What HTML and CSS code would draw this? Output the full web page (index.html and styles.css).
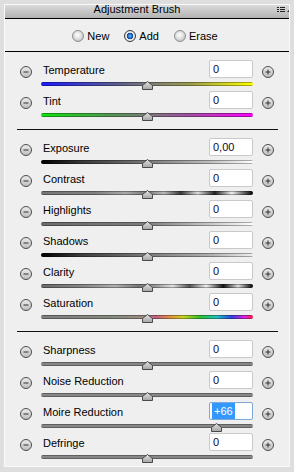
FILE: index.html
```html
<!DOCTYPE html>
<html>
<head>
<meta charset="utf-8">
<link rel="stylesheet" href="styles.css">
</head>
<body>
<div class="panel">
  <div class="header">
    <span class="title">Adjustment Brush</span>
    <svg class="menu" width="12" height="7" viewBox="0 0 12 7">
      <rect x="0" y="0" width="2" height="1" fill="#222"/>
      <rect x="3" y="0" width="5" height="1" fill="#222"/>
      <rect x="0" y="2" width="2" height="1" fill="#222"/>
      <rect x="3" y="2" width="5" height="1" fill="#222"/>
      <rect x="0" y="4" width="2" height="1" fill="#222"/>
      <rect x="3" y="4" width="5" height="1" fill="#222"/>
      <polygon points="10,5 12,5 12,3" fill="#222"/>
    </svg>
  </div>
  <div class="modes">
    <span class="mode"><span class="radio"></span>New</span>
    <span class="mode"><span class="radio on"></span>Add</span>
    <span class="mode"><span class="radio"></span>Erase</span>
  </div>

  <div class="section">
    <div class="row">
      <svg class="btn" viewBox="0 0 12 12"><circle cx="6" cy="6" r="5.5" class="c"/><rect x="3.5" y="5.5" width="5" height="1" fill="#333"/></svg>
      <div class="body">
        <div class="top"><span class="label">Temperature</span><span class="field">0</span></div>
        <div class="slider"><div class="track t-temp"></div><svg class="thumb" style="left:50%" viewBox="0 0 11 9"><polygon points="5.5,0.5 10.5,4.5 10.5,8.5 0.5,8.5 0.5,4.5" class="th"/></svg></div>
      </div>
      <svg class="btn" viewBox="0 0 12 12"><circle cx="6" cy="6" r="5.5" class="c"/><rect x="3.5" y="5.5" width="5" height="1" fill="#333"/><rect x="5.5" y="3.5" width="1" height="5" fill="#333"/></svg>
    </div>
    <div class="row">
      <svg class="btn" viewBox="0 0 12 12"><circle cx="6" cy="6" r="5.5" class="c"/><rect x="3.5" y="5.5" width="5" height="1" fill="#333"/></svg>
      <div class="body">
        <div class="top"><span class="label">Tint</span><span class="field">0</span></div>
        <div class="slider"><div class="track t-tint"></div><svg class="thumb" style="left:50%" viewBox="0 0 11 9"><polygon points="5.5,0.5 10.5,4.5 10.5,8.5 0.5,8.5 0.5,4.5" class="th"/></svg></div>
      </div>
      <svg class="btn" viewBox="0 0 12 12"><circle cx="6" cy="6" r="5.5" class="c"/><rect x="3.5" y="5.5" width="5" height="1" fill="#333"/><rect x="5.5" y="3.5" width="1" height="5" fill="#333"/></svg>
    </div>
  </div>
  <div class="sep"></div>

  <div class="section">
    <div class="row">
      <svg class="btn" viewBox="0 0 12 12"><circle cx="6" cy="6" r="5.5" class="c"/><rect x="3.5" y="5.5" width="5" height="1" fill="#333"/></svg>
      <div class="body">
        <div class="top"><span class="label">Exposure</span><span class="field">0,00</span></div>
        <div class="slider"><div class="track t-exp"></div><svg class="thumb" style="left:50%" viewBox="0 0 11 9"><polygon points="5.5,0.5 10.5,4.5 10.5,8.5 0.5,8.5 0.5,4.5" class="th"/></svg></div>
      </div>
      <svg class="btn" viewBox="0 0 12 12"><circle cx="6" cy="6" r="5.5" class="c"/><rect x="3.5" y="5.5" width="5" height="1" fill="#333"/><rect x="5.5" y="3.5" width="1" height="5" fill="#333"/></svg>
    </div>
    <div class="row">
      <svg class="btn" viewBox="0 0 12 12"><circle cx="6" cy="6" r="5.5" class="c"/><rect x="3.5" y="5.5" width="5" height="1" fill="#333"/></svg>
      <div class="body">
        <div class="top"><span class="label">Contrast</span><span class="field">0</span></div>
        <div class="slider"><div class="track t-con"></div><svg class="thumb" style="left:50%" viewBox="0 0 11 9"><polygon points="5.5,0.5 10.5,4.5 10.5,8.5 0.5,8.5 0.5,4.5" class="th"/></svg></div>
      </div>
      <svg class="btn" viewBox="0 0 12 12"><circle cx="6" cy="6" r="5.5" class="c"/><rect x="3.5" y="5.5" width="5" height="1" fill="#333"/><rect x="5.5" y="3.5" width="1" height="5" fill="#333"/></svg>
    </div>
    <div class="row">
      <svg class="btn" viewBox="0 0 12 12"><circle cx="6" cy="6" r="5.5" class="c"/><rect x="3.5" y="5.5" width="5" height="1" fill="#333"/></svg>
      <div class="body">
        <div class="top"><span class="label">Highlights</span><span class="field">0</span></div>
        <div class="slider"><div class="track t-hi"></div><svg class="thumb" style="left:50%" viewBox="0 0 11 9"><polygon points="5.5,0.5 10.5,4.5 10.5,8.5 0.5,8.5 0.5,4.5" class="th"/></svg></div>
      </div>
      <svg class="btn" viewBox="0 0 12 12"><circle cx="6" cy="6" r="5.5" class="c"/><rect x="3.5" y="5.5" width="5" height="1" fill="#333"/><rect x="5.5" y="3.5" width="1" height="5" fill="#333"/></svg>
    </div>
    <div class="row">
      <svg class="btn" viewBox="0 0 12 12"><circle cx="6" cy="6" r="5.5" class="c"/><rect x="3.5" y="5.5" width="5" height="1" fill="#333"/></svg>
      <div class="body">
        <div class="top"><span class="label">Shadows</span><span class="field">0</span></div>
        <div class="slider"><div class="track t-sh"></div><svg class="thumb" style="left:50%" viewBox="0 0 11 9"><polygon points="5.5,0.5 10.5,4.5 10.5,8.5 0.5,8.5 0.5,4.5" class="th"/></svg></div>
      </div>
      <svg class="btn" viewBox="0 0 12 12"><circle cx="6" cy="6" r="5.5" class="c"/><rect x="3.5" y="5.5" width="5" height="1" fill="#333"/><rect x="5.5" y="3.5" width="1" height="5" fill="#333"/></svg>
    </div>
    <div class="row">
      <svg class="btn" viewBox="0 0 12 12"><circle cx="6" cy="6" r="5.5" class="c"/><rect x="3.5" y="5.5" width="5" height="1" fill="#333"/></svg>
      <div class="body">
        <div class="top"><span class="label">Clarity</span><span class="field">0</span></div>
        <div class="slider"><div class="track t-cla"></div><svg class="thumb" style="left:50%" viewBox="0 0 11 9"><polygon points="5.5,0.5 10.5,4.5 10.5,8.5 0.5,8.5 0.5,4.5" class="th"/></svg></div>
      </div>
      <svg class="btn" viewBox="0 0 12 12"><circle cx="6" cy="6" r="5.5" class="c"/><rect x="3.5" y="5.5" width="5" height="1" fill="#333"/><rect x="5.5" y="3.5" width="1" height="5" fill="#333"/></svg>
    </div>
    <div class="row">
      <svg class="btn" viewBox="0 0 12 12"><circle cx="6" cy="6" r="5.5" class="c"/><rect x="3.5" y="5.5" width="5" height="1" fill="#333"/></svg>
      <div class="body">
        <div class="top"><span class="label">Saturation</span><span class="field">0</span></div>
        <div class="slider"><div class="track t-sat"></div><svg class="thumb" style="left:50%" viewBox="0 0 11 9"><polygon points="5.5,0.5 10.5,4.5 10.5,8.5 0.5,8.5 0.5,4.5" class="th"/></svg></div>
      </div>
      <svg class="btn" viewBox="0 0 12 12"><circle cx="6" cy="6" r="5.5" class="c"/><rect x="3.5" y="5.5" width="5" height="1" fill="#333"/><rect x="5.5" y="3.5" width="1" height="5" fill="#333"/></svg>
    </div>
  </div>
  <div class="sep"></div>

  <div class="section last">
    <div class="row">
      <svg class="btn" viewBox="0 0 12 12"><circle cx="6" cy="6" r="5.5" class="c"/><rect x="3.5" y="5.5" width="5" height="1" fill="#333"/></svg>
      <div class="body">
        <div class="top"><span class="label">Sharpness</span><span class="field">0</span></div>
        <div class="slider"><div class="track t-plain"></div><svg class="thumb" style="left:50%" viewBox="0 0 11 9"><polygon points="5.5,0.5 10.5,4.5 10.5,8.5 0.5,8.5 0.5,4.5" class="th"/></svg></div>
      </div>
      <svg class="btn" viewBox="0 0 12 12"><circle cx="6" cy="6" r="5.5" class="c"/><rect x="3.5" y="5.5" width="5" height="1" fill="#333"/><rect x="5.5" y="3.5" width="1" height="5" fill="#333"/></svg>
    </div>
    <div class="row">
      <svg class="btn" viewBox="0 0 12 12"><circle cx="6" cy="6" r="5.5" class="c"/><rect x="3.5" y="5.5" width="5" height="1" fill="#333"/></svg>
      <div class="body">
        <div class="top"><span class="label">Noise Reduction</span><span class="field">0</span></div>
        <div class="slider"><div class="track t-plain"></div><svg class="thumb" style="left:50%" viewBox="0 0 11 9"><polygon points="5.5,0.5 10.5,4.5 10.5,8.5 0.5,8.5 0.5,4.5" class="th"/></svg></div>
      </div>
      <svg class="btn" viewBox="0 0 12 12"><circle cx="6" cy="6" r="5.5" class="c"/><rect x="3.5" y="5.5" width="5" height="1" fill="#333"/><rect x="5.5" y="3.5" width="1" height="5" fill="#333"/></svg>
    </div>
    <div class="row">
      <svg class="btn" viewBox="0 0 12 12"><circle cx="6" cy="6" r="5.5" class="c"/><rect x="3.5" y="5.5" width="5" height="1" fill="#333"/></svg>
      <div class="body">
        <div class="top"><span class="label">Moire Reduction</span><span class="field active"><span class="sel">+66</span></span></div>
        <div class="slider"><div class="track t-plain"></div><svg class="thumb" style="left:83%" viewBox="0 0 11 9"><polygon points="5.5,0.5 10.5,4.5 10.5,8.5 0.5,8.5 0.5,4.5" class="th"/></svg></div>
      </div>
      <svg class="btn" viewBox="0 0 12 12"><circle cx="6" cy="6" r="5.5" class="c"/><rect x="3.5" y="5.5" width="5" height="1" fill="#333"/><rect x="5.5" y="3.5" width="1" height="5" fill="#333"/></svg>
    </div>
    <div class="row">
      <svg class="btn" viewBox="0 0 12 12"><circle cx="6" cy="6" r="5.5" class="c"/><rect x="3.5" y="5.5" width="5" height="1" fill="#333"/></svg>
      <div class="body">
        <div class="top"><span class="label">Defringe</span><span class="field">0</span></div>
        <div class="slider"><div class="track t-plain"></div><svg class="thumb" style="left:50%" viewBox="0 0 11 9"><polygon points="5.5,0.5 10.5,4.5 10.5,8.5 0.5,8.5 0.5,4.5" class="th"/></svg></div>
      </div>
      <svg class="btn" viewBox="0 0 12 12"><circle cx="6" cy="6" r="5.5" class="c"/><rect x="3.5" y="5.5" width="5" height="1" fill="#333"/><rect x="5.5" y="3.5" width="1" height="5" fill="#333"/></svg>
    </div>
  </div>

  <svg width="0" height="0" class="defs">
    <defs>
      <linearGradient id="gbtn" x1="0" y1="0" x2="0" y2="1">
        <stop offset="0" stop-color="#ececec"/>
        <stop offset="1" stop-color="#bdbdbd"/>
      </linearGradient>
      <linearGradient id="gthumb" x1="0" y1="0" x2="0" y2="1">
        <stop offset="0" stop-color="#e4e4e4"/>
        <stop offset="1" stop-color="#a4a4a4"/>
      </linearGradient>
    </defs>
  </svg>
</div>
</body>
</html>
```
FILE: styles.css
```css
html, body {
  margin: 0;
  padding: 0;
}
body {
  background: #dedede;
  padding: 4px 4px 5px 4px;
  font-family: "Liberation Sans", Arial, sans-serif;
  font-size: 11px;
  color: #000;
}
.panel {
  position: relative;
  box-sizing: border-box;
  width: 286px;
  height: 463px;
  border: 1px solid #f9f9f9;
  background: #efefef;
}
.defs {
  position: absolute;
}
.header {
  display: grid;
  grid-template-columns: 1fr 12px;
  height: 13px;
  border-bottom: 1px solid #000;
  background: linear-gradient(#dadada, #b3b3b3);
}
.title {
  text-align: center;
  padding-right: 8px;
  line-height: 9px;
  color: #000;
}
.menu {
  margin-top: 2px;
}
.modes {
  display: flex;
  justify-content: center;
  align-items: center;
  gap: 15px;
  box-sizing: border-box;
  height: 33px;
  padding-right: 4px;
  border-bottom: 1px solid #000;
}
.mode {
  display: flex;
  align-items: center;
  gap: 3px;
  line-height: 14px;
  padding-top: 1px;
}
.radio {
  box-sizing: border-box;
  width: 12px;
  height: 12px;
  border-radius: 50%;
  border: 1px solid #8d8d8d;
  background: radial-gradient(circle at 45% 40%, #ffffff 0, #e6e6e6 3px, #c9c9c9 6px);
}
.radio.on {
  border-color: #3a3a3a;
  background: radial-gradient(circle at 50% 50%, #6cb8ff 0, #1f6fd0 2px, #123f80 3px, #f2f2f2 3.6px, #d6d6d6 6px);
}
.section {
  padding: 8px 0 7px 0;
}
.section.last {
  padding-bottom: 0;
}
.sep {
  height: 1px;
  background: #111;
  margin: 0 11px 0 12px;
}
.row {
  display: grid;
  grid-template-columns: 12px 212px 12px;
  column-gap: 9px;
  padding-left: 15px;
  height: 31px;
}
.btn {
  width: 12px;
  height: 12px;
  margin-top: 6px;
}
.btn .c {
  fill: url(#gbtn);
  stroke: #4e4e4e;
  stroke-width: 1;
}
.top {
  display: flex;
  justify-content: space-between;
  height: 18px;
}
.label {
  line-height: 18px;
  padding: 1px 0 0 2px;
  white-space: nowrap;
}
.field {
  box-sizing: border-box;
  width: 44px;
  height: 18px;
  border: 1px solid #c9c9c9;
  border-radius: 2px;
  background: #fff;
  padding-left: 3px;
  line-height: 16px;
  color: #0a0a2a;
}
.field.active {
  border-color: #7da8d8;
}
.sel {
  display: inline-block;
  margin-left: -1px;
  padding: 0 2px;
  height: 16px;
  background: #3399ff;
  color: #fff;
}
.slider {
  position: relative;
  margin-top: 4px;
  height: 9px;
}
.track {
  height: 4px;
  border-radius: 2px;
}
.thumb {
  position: absolute;
  top: -1px;
  width: 11px;
  height: 9px;
  margin-left: -5.5px;
}
.th {
  fill: url(#gthumb);
  stroke: #4a4a4a;
  stroke-width: 1;
}
.t-plain {
  background: linear-gradient(#4a4a4a, #8c8c8c 40%, #858585 65%, #4a4a4a);
}
.t-temp {
  background: linear-gradient(rgba(0,0,0,.5), rgba(0,0,0,0) 35%, rgba(0,0,0,0) 65%, rgba(0,0,0,.5)),
    linear-gradient(to right, #1a1aff, #5a5a90 35%, #7a7a7a 50%, #9a9a50 70%, #ffff00);
}
.t-tint {
  background: linear-gradient(rgba(0,0,0,.5), rgba(0,0,0,0) 35%, rgba(0,0,0,0) 65%, rgba(0,0,0,.5)),
    linear-gradient(to right, #10e010, #5a905a 35%, #7a7a7a 50%, #a050a0 70%, #ff00ff);
}
.t-exp {
  background: linear-gradient(rgba(0,0,0,.5), rgba(0,0,0,0) 35%, rgba(0,0,0,0) 65%, rgba(0,0,0,.5)),
    linear-gradient(to right, #000, #3a3a3a 20%, #7a7a7a 50%, #c0c0c0 80%, #fff);
}
.t-con {
  background: linear-gradient(rgba(0,0,0,.5), rgba(0,0,0,0) 35%, rgba(0,0,0,0) 65%, rgba(0,0,0,.5)),
    linear-gradient(to right, #777 0%, #808080 25%, #a8a8a8 40%, #777 50%, #b8b8b8 58%, #3a3a3a 66%, #dcdcdc 74%, #222 82%, #eee 90%, #000 100%);
}
.t-hi {
  background: linear-gradient(rgba(0,0,0,.5), rgba(0,0,0,0) 35%, rgba(0,0,0,0) 65%, rgba(0,0,0,.5)),
    linear-gradient(to right, #6a6a6a, #7e7e7e 50%, #c8c8c8 80%, #fff);
}
.t-sh {
  background: linear-gradient(rgba(0,0,0,.5), rgba(0,0,0,0) 35%, rgba(0,0,0,0) 65%, rgba(0,0,0,.5)),
    linear-gradient(to right, #000, #404040 20%, #7a7a7a 50%, #b0b0b0 80%, #f0f0f0);
}
.t-cla {
  background: linear-gradient(rgba(0,0,0,.5), rgba(0,0,0,0) 35%, rgba(0,0,0,0) 65%, rgba(0,0,0,.5)),
    linear-gradient(to right, #6a6a6a 0%, #888 20%, #b0b0b0 35%, #777 46%, #999 54%, #e0e0e0 62%, #555 70%, #eee 78%, #111 86%, #ddd 93%, #000 100%);
}
.t-sat {
  background: linear-gradient(rgba(0,0,0,.5), rgba(0,0,0,0) 35%, rgba(0,0,0,0) 65%, rgba(0,0,0,.5)),
    linear-gradient(to right, #808080 0%, #868a80 35%, #9a8a80 48%, #c06080 54%, #e09040 61%, #c8d020 67%, #30c030 75%, #20c0c0 83%, #3040e0 90%, #e020e0 96%, #ff2040 100%);
}
```
